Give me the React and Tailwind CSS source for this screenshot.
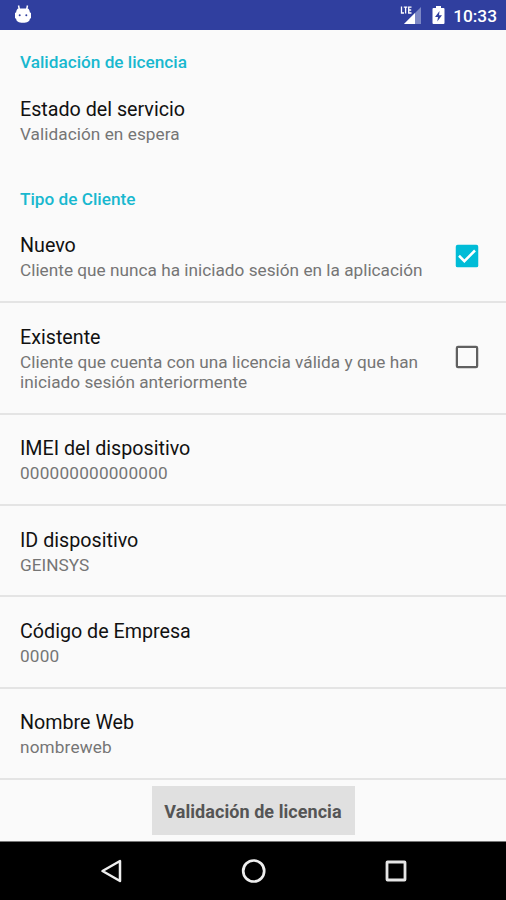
function Category({ children, className }) {
  return (
    <h2 className={`px-[20px] text-[17.2px] leading-[20px] font-medium text-[#18b8cf] ${className}`}>
      {children}
    </h2>
  );
}

function Checkbox({ checked }) {
  return (
    <svg className={`h-[30px] w-[30px] shrink-0 ${checked ? "" : "mb-[3px]"}`} viewBox="0 0 24 24">
      {checked ? (
        <>
          <rect x="3" y="3" width="18" height="18" rx="1.5" fill="#00bcd7" />
          <path d="M5.6 11.800l4.300 4.300 8.500-8.500" fill="none" stroke="#fff" strokeWidth="2" />
        </>
      ) : (
        <rect x="3.900" y="3.900" width="16.200" height="16.200" rx=".9" fill="none" stroke="#606060" strokeWidth="1.800" />
      )}
    </svg>
  );
}

function Preference({ title, summary, className, summaryClassName = "tracking-[0.02px]", children }) {
  return (
    <div className={`flex items-center justify-between pr-[24px] pl-[20px] ${className}`}>
      <div>
        <div className="text-[19.7px] leading-[26px] text-[#111111]">{title}</div>
        <div className={`mt-px text-[17.2px] leading-[20px] whitespace-pre-line text-[#757575] ${summaryClassName}`}>
          {summary}
        </div>
      </div>
      {children}
    </div>
  );
}

const line = "border-b-2 border-[#e4e4e4]";

export default function App() {
  return (
    <div className="flex h-[900px] w-[506px] flex-col overflow-hidden bg-[#fafafa] font-['Roboto',sans-serif]">
      <header className="flex h-[30px] shrink-0 items-center bg-[#303f9f] pr-[9px] pl-[14px] text-white">
        <svg className="h-[20px] w-[18px]" viewBox="0 0 18 20">
          <path d="M4.500 .5L5.500 5M13.500 .5L12.500 5" stroke="#fff" strokeWidth="1.500" />
          <path
            fill="#fff"
            d="M4 3.500h10c1.200 1 1.800 2.200 1.800 3.700l1.200.8v5l-1.200 1c-.3 2.500-2.400 3.800-6.800 3.800s-6.500-1.300-6.800-3.800L1 13V8l1.200-.8C2.200 5.700 2.800 4.500 4 3.500z"
          />
          <circle cx="5.700" cy="10.300" r="1" fill="#303f9f" />
          <circle cx="12.300" cy="10.300" r="1" fill="#303f9f" />
        </svg>
        <svg className="ml-auto h-[20px] w-[22px]" viewBox="0 0 22 20">
          <path d="M21 2v17H4z" fill="#7d88c5" />
          <path d="M15 8v11H4z" fill="#fff" />
          <path d="M0 0h12v9.500H0z" fill="#303f9f" />
          <path
            d="M1.500 1.500v6.500h2.500M3.800 2.200h3.500M5.600 2.200v6.400M11.500 2.200H8.700V8h2.800M8.700 5h2.500"
            fill="none"
            stroke="#fff"
            strokeWidth="1.300"
          />
        </svg>
        <svg className="ml-[10px] h-[20px] w-[13px]" viewBox="0 0 13 20">
          <path d="M4 1h5v2h2.500q1 0 1 1v14q0 1-1 1h-10q-1 0-1-1V4q0-1 1-1H4z" fill="#fff" />
          <path d="M7.500 6L3 12h3l-.7 4.500L10 10.200H7z" fill="#303f9f" />
        </svg>
        <span className="ml-[8px] pt-px text-[17.3px] leading-[22px] font-medium">10:33</span>
      </header>

      <main className="flex min-h-0 flex-1 flex-col">
        <Category className="mt-[22px]">Validación de licencia</Category>
        <Preference className="mt-[25px]" title="Estado del servicio" summary="Validación en espera" summaryClassName="tracking-[0.06px]" />
        <Category className="mt-[45px]">Tipo de Cliente</Category>
        <Preference
          className={`h-[94px] shrink-0 pt-[2px] ${line}`}
          title="Nuevo"
          summary="Cliente que nunca ha iniciado sesión en la aplicación"
        >
          <Checkbox checked />
        </Preference>
        <Preference
          className={`h-[112px] shrink-0 pt-px ${line}`}
          title="Existente"
          summary={"Cliente que cuenta con una licencia válida y que han\niniciado sesión anteriormente"}
          summaryClassName="tracking-[0.03px]"
        >
          <Checkbox />
        </Preference>
        <Preference
          className={`h-[91px] shrink-0 ${line}`}
          title="IMEI del dispositivo"
          summary="000000000000000"
          summaryClassName="tracking-[0.2px]"
        />
        <Preference className={`h-[91px] shrink-0 pt-px ${line}`} title="ID dispositivo" summary="GEINSYS" />
        <Preference className={`h-[92px] shrink-0 pt-px ${line}`} title="Código de Empresa" summary="0000" summaryClassName="tracking-[0.2px]" />
        <Preference className={`h-[91px] shrink-0 ${line}`} title="Nombre Web" summary="nombreweb" summaryClassName="tracking-[0.15px]" />
        <div className="flex justify-center pt-[6px]">
          <button className="h-[49px] w-[203px] bg-[#e0e0e0] pt-px text-[18px] font-bold tracking-[0.06px] text-[#555555]">
            Validación de licencia
          </button>
        </div>
      </main>

      <nav className="flex h-[59px] shrink-0 items-center justify-between border-t border-[#777777] bg-black pr-[98px] pl-[99px]">
        <svg className="h-[26px] w-[24px]" viewBox="0 0 24 26" fill="none" stroke="#eeeeee" strokeWidth="2.500">
          <path d="M21 3v20L3.500 13z" strokeLinejoin="round" />
        </svg>
        <svg className="h-[26px] w-[26px]" viewBox="0 0 26 26" fill="none" stroke="#eeeeee" strokeWidth="2.700">
          <circle cx="12.700" cy="13" r="10.500" />
        </svg>
        <svg className="h-[24px] w-[24px]" viewBox="0 0 24 24" fill="none" stroke="#e5e5e5" strokeWidth="2.800">
          <rect x="3" y="3" width="18" height="18" rx=".5" />
        </svg>
      </nav>
    </div>
  );
}
